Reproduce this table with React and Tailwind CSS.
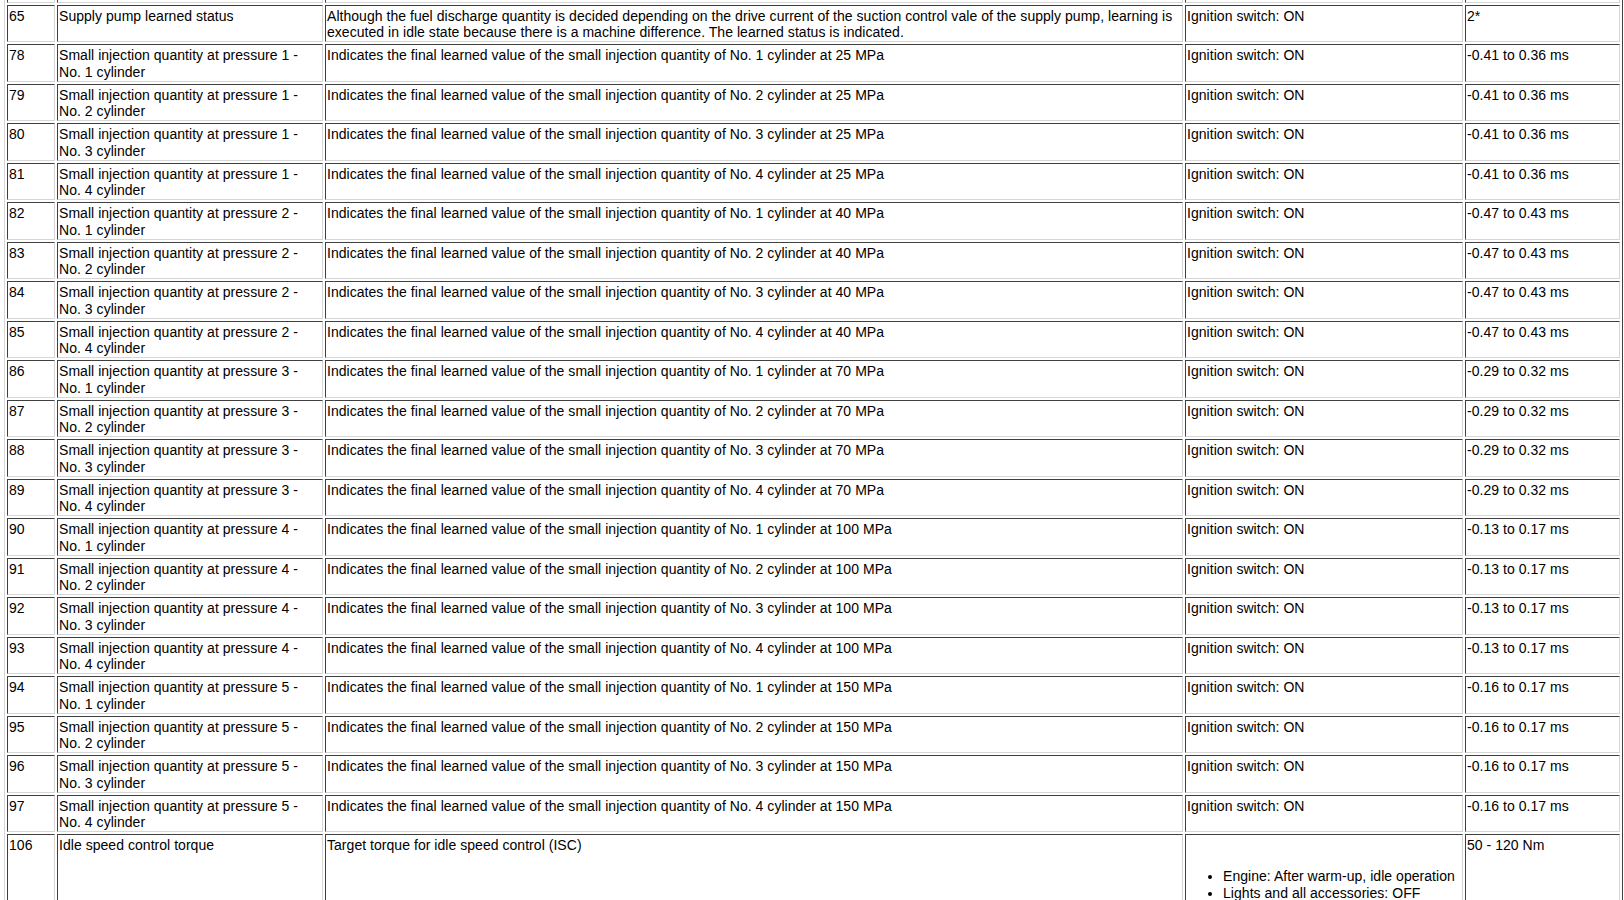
import React from 'react';

const MPA = [25, 40, 70, 100, 150];
const RANGES = [
    '-0.41 to 0.36 ms',
    '-0.47 to 0.43 ms',
    '-0.29 to 0.32 ms',
    '-0.13 to 0.17 ms',
    '-0.16 to 0.17 ms',
];

const rows = [
    {
        no: '65',
        item: 'Supply pump learned status',
        desc: 'Although the fuel discharge quantity is decided depending on the drive current of the suction control vale of the supply pump, learning is executed in idle state because there is a machine difference. The learned status is indicated.',
        cond: 'Ignition switch: ON',
        value: '2*',
    },
];

// 78 - 97: small injection quantity, 5 pressures x 4 cylinders
for (let p = 0; p < 5; p++) {
    for (let c = 1; c <= 4; c++) {
        rows.push({
            no: String(78 + p * 4 + c - 1),
            item: `Small injection quantity at pressure ${p + 1} - No. ${c} cylinder`,
            desc: `Indicates the final learned value of the small injection quantity of No. ${c} cylinder at ${MPA[p]} MPa`,
            cond: 'Ignition switch: ON',
            value: RANGES[p],
        });
    }
}

function Cell({ children }) {
    return (
        <div className="border border-t-[#404040] border-l-[#404040] border-r-[#d6d6d6] border-b-[#d6d6d6] bg-white px-[1px] pt-[2px] pb-0">
            {children}
        </div>
    );
}

export default function App() {
    return (
        <div className="h-screen overflow-hidden bg-white font-['Liberation_Sans',Arial,sans-serif] text-[14px] leading-[16.75px] tracking-[0.04px] text-black">
            <div className="-mt-[38px] ml-[4px] w-fit border border-t-[#d6d6d6] border-l-[#d6d6d6] border-r-[#404040] border-b-[#404040]">
                <div className="grid grid-cols-[48px_266px_858px_278px_155px] gap-[2px] p-[2px]">
                    {/* previous row, scrolled out of view */}
                    <Cell><div className="h-[33.5px]" /></Cell>
                    <Cell />
                    <Cell />
                    <Cell />
                    <Cell />

                    {rows.map((r) => (
                        <React.Fragment key={r.no}>
                            <Cell>{r.no}</Cell>
                            <Cell>{r.item}</Cell>
                            <Cell>{r.desc}</Cell>
                            <Cell>{r.cond}</Cell>
                            <Cell>{r.value}</Cell>
                        </React.Fragment>
                    ))}

                    {/* 106 */}
                    <Cell>106</Cell>
                    <Cell>Idle speed control torque</Cell>
                    <Cell>Target torque for idle speed control (ISC)</Cell>
                    <Cell>
                        <div>&nbsp;</div>
                        <ul className="my-[14px] list-disc pl-[36px]">
                            <li>Engine: After warm-up, idle operation</li>
                            <li>Lights and all accessories: OFF</li>
                        </ul>
                    </Cell>
                    <Cell>50 - 120 Nm</Cell>
                </div>
            </div>
        </div>
    );
}
